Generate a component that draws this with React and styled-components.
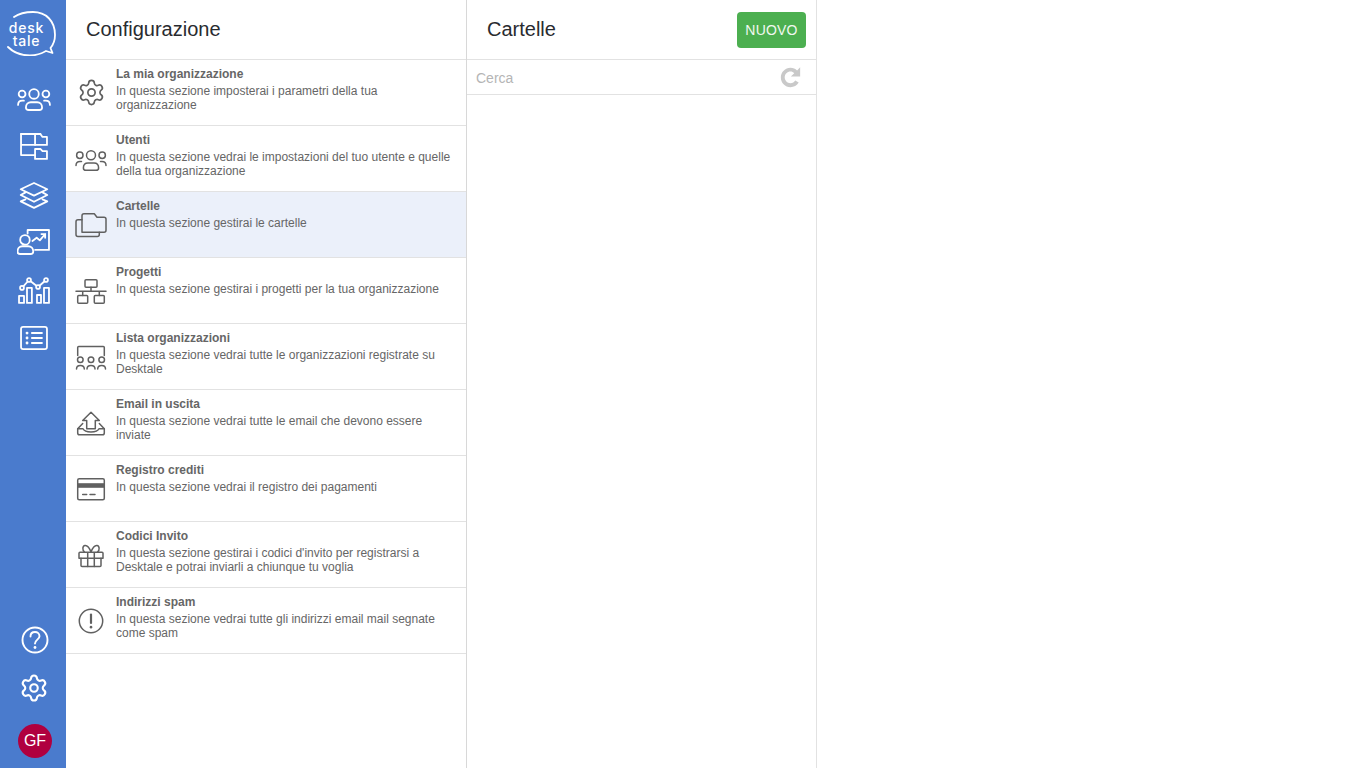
import React from 'react'
import styled, { createGlobalStyle } from 'styled-components'
import { Settings } from 'lucide-react'

const GlobalStyle = createGlobalStyle`
  html, body {
    margin: 0;
    padding: 0;
    height: 100%;
    background: #fff;
    font-family: "Liberation Sans", Arial, sans-serif;
    overflow: hidden;
  }
  #root { height: 100%; }
`

const BLUE = '#4a7bcd'

const Icon = ({ size = 32, sw = 1.5, children }) => (
  <svg width={size} height={size} viewBox="0 0 32 32" fill="none" stroke="currentColor" strokeWidth={sw} strokeLinecap="round" strokeLinejoin="round">
    {children}
  </svg>
)

const GearIcon = ({ size, sw }) => <Settings size={size} strokeWidth={sw} />

const UsersIcon = (p) => (
  <Icon {...p}>
    <circle cx="16" cy="12.200" r="4.500" />
    <circle cx="4.800" cy="12.200" r="3.200" />
    <circle cx="27.200" cy="12.200" r="3.200" />
    <path d="M11 27.300c-1.800 0-2.600-.9-2.600-2.400 0-3 2-4.900 4.600-4.900h6c2.600 0 4.600 1.900 4.600 4.900 0 1.500-.8 2.400-2.600 2.400z" />
    <path d="M1 22.500c0-2.500 1.500-4 4-4h1.500M31 22.500c0-2.500-1.500-4-4-4h-1.500" />
  </Icon>
)

const FolderTreeIcon = (p) => (
  <Icon {...p}>
    <path d="M3.800 4.700V24.500H17M3.800 15H17" />
    <path d="M3.800 4.700H22" />
    <path d="M17 15V4.700h5l2 2.800h4.200V15z" />
    <path d="M17 28.200v-9.400h5l2 2h4.200v7.400z" />
  </Icon>
)

const LayersIcon = (p) => (
  <Icon {...p}>
    <path d="M16 5.600 28.500 11.500 16 17.500 3.500 11.500z" />
    <path d="M8 14.500 3.500 17 16 23.300 28.500 17 24 14.500" />
    <path d="M8 21 3.500 23 16 29 28.500 23 24 21" />
  </Icon>
)

const PresenterIcon = (p) => (
  <Icon {...p}>
    <path d="M10 8V4.700H30.100V23.500H17" />
    <circle cx="7.500" cy="14" r="4.500" />
    <path d="M3 27.300C1 27.300.5 26.400.5 25c0-3 2-5 4.500-5h5.500c2.800 0 4.800 2 4.800 5 0 1.400-.5 2.300-2.500 2.300z" />
    <path d="m14.500 15 4-3 3 2.500 5-6M23 8.500h3.500V12" />
  </Icon>
)

const ChartIcon = (p) => (
  <Icon {...p}>
    <path d="M4.700 14 11.300 6.600 19.800 13.200 27.300 6.600" />
    <circle cx="4.700" cy="14" r="1.800" fill={BLUE} />
    <circle cx="11.300" cy="6.600" r="1.800" fill={BLUE} />
    <circle cx="19.800" cy="13.200" r="1.800" fill={BLUE} />
    <circle cx="27.300" cy="6.600" r="1.800" fill={BLUE} />
    <rect x="1.900" y="21.600" width="4.700" height="6.600" />
    <rect x="9.400" y="14" width="4.600" height="14.200" />
    <rect x="18.800" y="20.700" width="3.800" height="7.500" />
    <rect x="25.400" y="14" width="4.700" height="14.200" />
  </Icon>
)

const ListIcon = (p) => (
  <Icon {...p}>
    <rect x="3.800" y="5.600" width="24.400" height="20.800" rx="2" />
    <path d="M14 11.300h9.500M14 16h9.500M14 20.700h9.500" />
    <path d="M9.400 11.300h.1M9.400 16h.1M9.400 20.700h.1" strokeWidth="2.600" />
  </Icon>
)

const HelpIcon = (p) => (
  <Icon {...p}>
    <circle cx="16" cy="16" r="12.500" />
    <path d="M11.500 12.500c0-2.800 2-4.500 4.500-4.500s4.500 1.700 4.500 4.200c0 3.300-4.500 3.600-4.500 7.300" />
    <path d="M16 23.500v.1" strokeWidth="2.800" />
  </Icon>
)

const FolderIcon = (p) => (
  <Icon {...p}>
    <path d="M7 10.800H3Q1 10.800 1 12.800V25.500Q1 27.500 3 27.500H22.300Q24.300 27.500 24.300 25.500V23.200" />
    <path d="M7 23.200V6.800Q7 4.800 9 4.800H19.300L22 8.200H29Q31 8.200 31 10.200V21.200Q31 23.200 29 23.200H7" />
  </Icon>
)

const NetworkIcon = (p) => (
  <Icon {...p}>
    <rect x="10" y="4.800" width="12" height="7.400" rx="1" />
    <path d="M1 16.200h30M16 12.200v4M7.700 16.200v4.300M24.300 16.200v4.300" />
    <rect x="2.700" y="20.500" width="10" height="7.700" rx="1" />
    <rect x="19.300" y="20.500" width="10" height="7.700" rx="1" />
  </Icon>
)

const OrgsIcon = (p) => (
  <Icon {...p}>
    <path d="M2.700 14.500V6.500c0-.7.300-1 1-1h24.600c.7 0 1 .3 1 1v8" />
    <circle cx="5.300" cy="18.800" r="2.800" />
    <circle cx="16" cy="18.800" r="2.800" />
    <circle cx="26.700" cy="18.800" r="2.800" />
    <path d="M1.500 28c0-2.500 1.500-3.500 3.800-3.500S9.300 25.500 9.300 28M12 28c0-2.500 1.700-3.500 4-3.500s4 1 4 3.500M22.700 28c0-2.500 1.700-3.500 4-3.500s3.800 1 3.800 3.500" />
  </Icon>
)

const OutboxIcon = (p) => (
  <Icon {...p}>
    <path d="M16 5.200 7.700 13.500h4v8.300h8.600v-8.300h4z" />
    <path d="M7.700 16.500 2.700 21.800V26Q2.700 27.800 4.500 27.800H27.500Q29.300 27.800 29.300 26V21.800L24.300 16.500" />
    <path d="M2.700 21.800H8Q9.500 25 16 25T24 21.800H29.300" />
  </Icon>
)

const CardIcon = (p) => (
  <Icon {...p}>
    <rect x="2.700" y="5.800" width="26.600" height="21" rx="1.500" />
    <rect x="2.700" y="10.200" width="26.600" height="4.600" fill="currentColor" stroke="none" />
    <path d="M7.700 21.500h4M15 21.500h5" />
  </Icon>
)

const GiftIcon = (p) => (
  <Icon {...p}>
    <path d="M6 19.200v7.300c0 .7.300 1 1 1h18c.7 0 1-.3 1-1v-7.300" />
    <path d="M4 19.200v-5c0-.7.300-1 1-1h22c.7 0 1 .3 1 1v5zM12.700 13.200v14.300M19.300 13.200v14.300" />
    <path d="M16 13c-1.500-4-3.500-6.800-6-6.500s-3 4.500-.5 6.500M16 13c1.500-4 3.500-6.800 6-6.500s3 4.500.5 6.500" />
  </Icon>
)

const AlertIcon = (p) => (
  <Icon {...p}>
    <circle cx="16" cy="16" r="11.700" />
    <path d="M16 9.500v8.500" strokeWidth="2.200" />
    <path d="M16 22v.2" strokeWidth="2.600" />
  </Icon>
)

const RefreshIcon = () => (
  <svg width="25" height="25" viewBox="0 0 22 22">
    <path d="M11 2.500c2.300 0 4.300.9 5.800 2.300L19.500 2v8.200h-8.200l3-3c-.9-.9-2-1.500-3.300-1.500-2.800 0-5.100 2.300-5.100 5.100S8.200 16 11 16c1.800 0 3.300-.9 4.200-2.300l3 1.800C16.700 18 14 19.600 11 19.600c-4.700 0-8.500-3.800-8.500-8.500S6.300 2.500 11 2.500z" fill="#c9c9c9" />
  </svg>
)

const sideTop = [UsersIcon, FolderTreeIcon, LayersIcon, PresenterIcon, ChartIcon, ListIcon]

const items = [
  { Ic: GearIcon, size: 29, sw: 1.400, title: 'La mia organizzazione', text: 'In questa sezione imposterai i parametri della tua organizzazione' },
  { Ic: UsersIcon, title: 'Utenti', text: 'In questa sezione vedrai le impostazioni del tuo utente e quelle della tua organizzazione' },
  { Ic: FolderIcon, title: 'Cartelle', text: 'In questa sezione gestirai le cartelle', active: true },
  { Ic: NetworkIcon, title: 'Progetti', text: 'In questa sezione gestirai i progetti per la tua organizzazione' },
  { Ic: OrgsIcon, title: 'Lista organizzazioni', text: 'In questa sezione vedrai tutte le organizzazioni registrate su Desktale' },
  { Ic: OutboxIcon, title: 'Email in uscita', text: 'In questa sezione vedrai tutte le email che devono essere inviate' },
  { Ic: CardIcon, title: 'Registro crediti', text: 'In questa sezione vedrai il registro dei pagamenti' },
  { Ic: GiftIcon, title: 'Codici Invito', text: "In questa sezione gestirai i codici d'invito per registrarsi a Desktale e potrai inviarli a chiunque tu voglia" },
  { Ic: AlertIcon, title: 'Indirizzi spam', text: 'In questa sezione vedrai tutte gli indirizzi email mail segnate come spam' },
]

export default function App() {
  return (
    <Page>
      <GlobalStyle />
      <Sidebar>
        <Logo>
          <svg width="52" height="46" viewBox="0 0 52 46" fill="none">
            <path d="M7 7C12 3.500 19 2 26 2 39 2 48 11 48 25 48 31 46 35 43.500 38L45.500 43 39 41C34 44 28 45.500 23 45.500 14 45.500 6 42 1 37" stroke="#fff" strokeWidth="1.800" strokeLinecap="round" strokeLinejoin="round" />
          </svg>
          <LogoText>desk<br />tale</LogoText>
        </Logo>
        <SideList>
          {sideTop.map((Ic, i) => (
            <SideButton key={i}><Ic size={34} sw={1.700} /></SideButton>
          ))}
        </SideList>
        <SideBottom>
          <SideButton $bottom $nudge><HelpIcon size={32} sw={1.900} /></SideButton>
          <SideButton $bottom><GearIcon size={30} sw={1.700} /></SideButton>
          <Avatar>GF</Avatar>
        </SideBottom>
      </Sidebar>

      <ConfigPanel>
        <PanelHeader>
          <PanelTitle>Configurazione</PanelTitle>
        </PanelHeader>
        {items.map((it) => (
          <Row key={it.title} $active={it.active}>
            <RowIcon><it.Ic size={it.size || 32} sw={it.sw || 1.500} /></RowIcon>
            <RowBody>
              <RowTitle>{it.title}</RowTitle>
              <RowText>{it.text}</RowText>
            </RowBody>
          </Row>
        ))}
      </ConfigPanel>

      <FolderPanel>
        <PanelHeader>
          <PanelTitle>Cartelle</PanelTitle>
          <NewButton>NUOVO</NewButton>
        </PanelHeader>
        <SearchBar>
          <SearchInput placeholder="Cerca" />
          <RefreshIcon />
        </SearchBar>
      </FolderPanel>
    </Page>
  )
}

const Page = styled.div`
  display: flex;
  height: 768px;
  background: #fff;
`

const Sidebar = styled.nav`
  display: flex;
  flex-direction: column;
  align-items: center;
  box-sizing: border-box;
  flex: 0 0 66px;
  padding-left: 1px;
  background: ${BLUE};
  color: #fff;
`

const Logo = styled.div`
  position: relative;
  width: 52px;
  height: 46px;
  margin-top: 10px;
  margin-right: 1px;
`

const LogoText = styled.div`
  position: absolute;
  top: 11px;
  left: 0;
  width: 39px;
  text-align: center;
  font-family: "Inter", sans-serif;
  font-size: 14px;
  line-height: 13px;
  font-weight: 500;
  letter-spacing: 0.8px;
`

const SideList = styled.div`
  display: flex;
  flex-direction: column;
  margin-top: 18px;
`

const SideButton = styled.div`
  display: flex;
  align-items: center;
  justify-content: center;
  box-sizing: border-box;
  width: 48px;
  height: ${(p) => (p.$bottom ? '47px' : '48px')};
  padding: ${(p) => (p.$nudge ? '0 0 2px 2px' : '0')};
`

const SideBottom = styled.div`
  display: flex;
  flex-direction: column;
  align-items: center;
  margin-top: auto;
  padding-bottom: 10px;
`

const Avatar = styled.div`
  display: flex;
  align-items: center;
  justify-content: center;
  width: 34px;
  height: 34px;
  margin: 13px 0 0 3px;
  border-radius: 50%;
  background: #b0003f;
  font-size: 16px;
`

const ConfigPanel = styled.section`
  flex: 0 0 401px;
  box-sizing: border-box;
  border-right: 1px solid #d8d8d8;
`

const FolderPanel = styled.section`
  flex: 0 0 350px;
  box-sizing: border-box;
  border-right: 1px solid #e2e2e2;
`

const PanelHeader = styled.header`
  display: flex;
  align-items: center;
  justify-content: space-between;
  box-sizing: border-box;
  height: 60px;
  padding: 1px 10px 0 20px;
  border-bottom: 1px solid #e2e2e2;
`

const PanelTitle = styled.h1`
  margin: 0 0 2px;
  font-size: 20px;
  font-weight: 400;
  color: #292b2f;
`

const NewButton = styled.button`
  width: 69px;
  height: 36px;
  padding: 0;
  border: 0;
  border-radius: 4px;
  background: #4caf50;
  color: #f1f8f1;
  font-family: inherit;
  font-size: 14px;
  font-weight: 400;
  letter-spacing: 0.2px;
`

const Row = styled.div`
  display: flex;
  box-sizing: border-box;
  height: 66px;
  border-bottom: 1px solid #e2e2e2;
  background: ${(p) => (p.$active ? '#ebf0fa' : '#fff')};
`

const RowIcon = styled.div`
  display: flex;
  align-items: center;
  justify-content: center;
  flex: 0 0 50px;
  color: #606060;
`

const RowBody = styled.div`
  flex: 1;
  padding: 7px 10px 0 0;
  font-size: 12px;
`

const RowTitle = styled.div`
  font-weight: 700;
  line-height: 14px;
  margin-bottom: 3px;
  color: #666;
`

const RowText = styled.div`
  line-height: 14.400px;
  color: #666;
`

const SearchBar = styled.div`
  display: flex;
  align-items: center;
  box-sizing: border-box;
  height: 35px;
  padding: 0 13px 0 9px;
  border-bottom: 1px solid #e2e2e2;
`

const SearchInput = styled.input`
  flex: 1;
  min-width: 0;
  padding: 2px 0 0;
  border: 0;
  outline: 0;
  font-family: inherit;
  font-size: 14px;
  color: #555;
  &::placeholder { color: #b5b5b5; opacity: 1; }
`
